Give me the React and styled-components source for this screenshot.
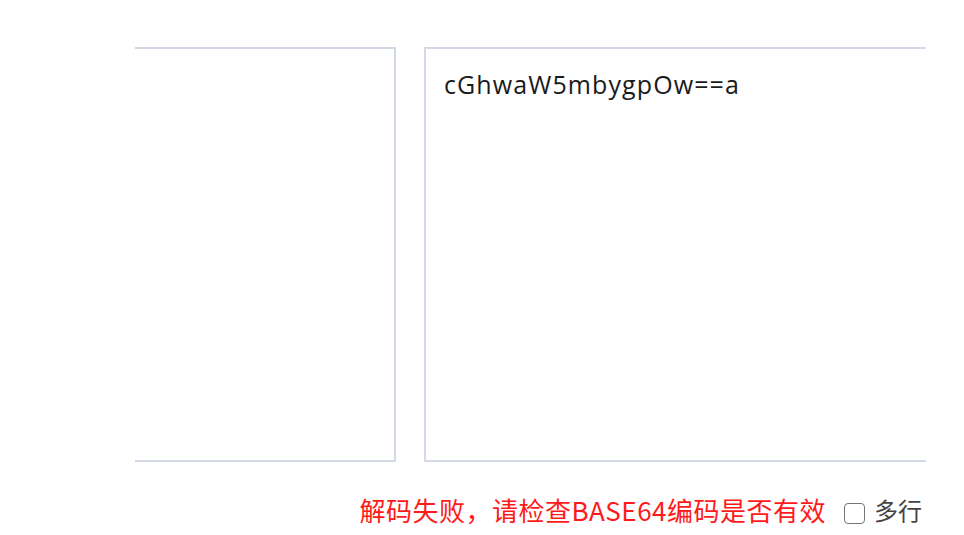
import React, { useState } from 'react';
import styled, { createGlobalStyle } from 'styled-components';

const GlobalStyle = createGlobalStyle`
  html, body {
    margin: 0;
    padding: 0;
    background: #fff;
    font-family: "Open Sans", "Noto Sans CJK SC", sans-serif;
  }
`;

const Page = styled.div`
  width: 964px;
  height: 535px;
  padding-top: 47px;
  box-sizing: border-box;
`;

const Viewport = styled.div`
  margin-left: 135px;
  width: 791px;
  overflow: hidden;
`;

const Panels = styled.div`
  display: flex;
  gap: 28px;
  margin-left: -20px;
  width: 900px;
`;

const Editor = styled.textarea`
  width: ${(props) => props.$width}px;
  height: 415px;
  flex: none;
  box-sizing: border-box;
  border: 2px solid #d3d9e7;
  border-radius: 0;
  padding: 18px 18px;
  margin: 0;
  resize: none;
  overflow: hidden;
  outline: none;
  font-family: "Open Sans", "Noto Sans CJK SC", sans-serif;
  font-size: 25px;
  letter-spacing: 1.1px;
  line-height: 34px;
  color: #1a1a1a;
  background: #fff;
`;

const Footer = styled.div`
  display: flex;
  justify-content: flex-end;
  align-items: center;
  gap: 18px;
  width: 922px;
  margin-top: 31px;
`;

const ErrorText = styled.span`
  color: #ff1a1a;
  font-size: 26px;
  letter-spacing: 0.5px;
  line-height: 34px;
  font-family: "Noto Sans CJK SC", sans-serif;
`;

const CheckLabel = styled.label`
  display: flex;
  align-items: center;
  gap: 9px;
  font-size: 24px;
  line-height: 34px;
  color: #444;
  font-family: "Noto Sans CJK SC", sans-serif;
  cursor: pointer;
`;

const Box = styled.span`
  width: 21px;
  height: 21px;
  margin-top: 6px;
  box-sizing: border-box;
  border: 1.5px solid #767676;
  border-radius: 4px;
  background: ${(props) => (props.$checked ? '#0075ff' : '#fff')};
`;

export default function App() {
  const [multiline, setMultiline] = useState(false);

  return (
    <Page>
      <GlobalStyle />
      <Viewport>
        <Panels>
          <Editor $width={281} readOnly value="" />
          <Editor $width={560} readOnly value="cGhwaW5mbygpOw==a" />
        </Panels>
      </Viewport>
      <Footer>
        <ErrorText>解码失败，请检查BASE64编码是否有效</ErrorText>
        <CheckLabel onClick={() => setMultiline(!multiline)}>
          <Box $checked={multiline} />
          多行
        </CheckLabel>
      </Footer>
    </Page>
  );
}
